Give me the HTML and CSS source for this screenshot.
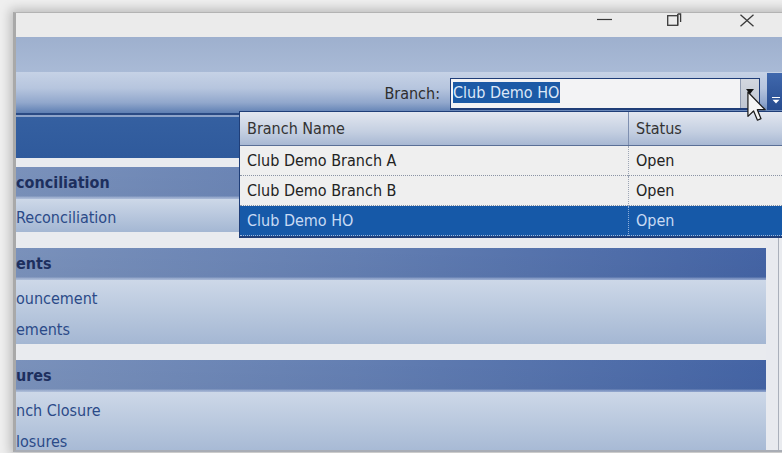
FILE: index.html
```html
<!DOCTYPE html>
<html lang="en">
<head>
<meta charset="utf-8">
<title>Branch</title>
<link rel="stylesheet" href="styles.css">
</head>
<body>
<div class="window">
  <div class="titlebar">
    <svg class="ctl ctl-min" width="15" height="12" viewBox="0 0 15 12"><path d="M0 5.5H15" stroke="#3a3a3a" stroke-width="1.2"/></svg>
    <svg class="ctl ctl-max" width="15" height="13" viewBox="0 0 15 13"><rect x="0.7" y="2.7" width="10" height="9.6" fill="none" stroke="#3a3a3a" stroke-width="1.3"/><path d="M10.7 1V12.3M10.7 1H13.6V9" fill="none" stroke="#3a3a3a" stroke-width="1.3"/></svg>
    <svg class="ctl ctl-close" width="16" height="13" viewBox="0 0 16 13"><path d="M1.5 0.8L14.5 12.2M14.5 0.8L1.5 12.2" stroke="#3a3a3a" stroke-width="1.3"/></svg>
  </div>
  <div class="ribbon"></div>
  <div class="toolbar">
    <span class="branch-label">Branch:</span>
    <div class="combo">
      <span class="combo-text"><span class="combo-sel">Club Demo HO</span></span>
      <span class="combo-btn"><svg width="8" height="5" viewBox="0 0 8 5"><path d="M0 0H8L4 5Z" fill="#111"/></svg></span>
    </div>
    <span class="qa-btn"><svg width="8" height="7" viewBox="0 0 8 7"><path d="M0 0.5H8" stroke="#fff"/><path d="M0.5 2.8H7.5L4 6.6Z" fill="#fff"/></svg></span>
  </div>
  <div class="content">
    <div class="nav">
      <div class="nav-top"></div>
      <section class="group">
        <div class="group-head">conciliation</div>
        <div class="group-items">
          <div class="item">Reconciliation</div>
        </div>
      </section>
      <section class="group">
        <div class="group-head">ents</div>
        <div class="group-items">
          <div class="item">ouncement</div>
          <div class="item">ements</div>
        </div>
      </section>
      <section class="group">
        <div class="group-head">ures</div>
        <div class="group-items">
          <div class="item">nch Closure</div>
          <div class="item">losures</div>
        </div>
      </section>
    </div>
    <div class="gutter"></div>
  </div>

  <div class="popup">
    <div class="prow phead">
      <div class="pcell">Branch Name</div>
      <div class="pcell">Status</div>
    </div>
    <div class="prow">
      <div class="pcell">Club Demo Branch A</div>
      <div class="pcell">Open</div>
    </div>
    <div class="prow">
      <div class="pcell">Club Demo Branch B</div>
      <div class="pcell">Open</div>
    </div>
    <div class="prow psel">
      <div class="pcell">Club Demo HO</div>
      <div class="pcell">Open</div>
    </div>
  </div>

  <svg class="cursor" width="20" height="31" viewBox="0 0 13 20"><path d="M0.6 0.6V16.4L4.3 12.9L6.8 18.9L9.1 17.9L6.7 12.1H11.8Z" fill="#f4f4f4" stroke="#1a1a1a" stroke-width="0.8" stroke-linejoin="round"/></svg>
</div>
</body>
</html>
```

FILE: styles.css
```css
html, body {
  margin: 0;
  padding: 0;
}

body {
  width: 782px;
  height: 453px;
  overflow: hidden;
  background: #efefef;
  font-family: "DejaVu Sans Condensed", "DejaVu Sans", sans-serif;
  font-stretch: condensed;
  font-size: 16px;
}

/* application window */
.window {
  position: relative;
  margin: 12px 0 0 13px;
  width: 772px;
  height: 437px;
  border-left: 3px solid #a9a9a9;
  border-top: 1px solid #b3b3b3;
  border-bottom: 2px solid #a9adb5;
  box-shadow: 0 0 10px 3px rgba(0, 0, 0, 0.22);
  background: #e9ebef;
  display: flex;
  flex-direction: column;
}

.titlebar {
  height: 24px;
  flex: none;
  background: #ebebeb;
  display: flex;
  align-items: flex-start;
  padding-left: 581px;
  box-sizing: border-box;
}

.ctl { display: block; flex: none; }
.ctl-min { margin-top: 1px; }
.ctl-max { margin-left: 55px; margin-top: 0; }
.ctl-close { margin-left: 57px; margin-top: 1px; }

.ribbon {
  height: 35px;
  flex: none;
  background: linear-gradient(#9eb0ce, #a9bad6);
}

.toolbar {
  height: 41px;
  flex: none;
  box-sizing: border-box;
  padding-top: 6px;
  display: flex;
  align-items: flex-start;
  background: linear-gradient(#c6d2e6 0%, #b6c5de 40%, #91a7cc 75%, #5e7fb3 100%);
}

.branch-label {
  margin-left: auto;
  color: #2e2e2e;
  line-height: 32px;
}

.combo {
  margin-left: 10px;
  width: 310px;
  height: 32px;
  box-sizing: border-box;
  border: 1px solid #1f3d78;
  border-bottom-width: 2px;
  background: #f3f3f5;
  display: flex;
}

.combo-text {
  flex: 1;
  padding: 3px 0 0 2px;
}

.combo-sel {
  display: inline-block;
  background: #1c5aa6;
  color: #dce8f8;
  line-height: 21px;
  padding-right: 1px;
}

.combo-btn {
  width: 19px;
  background: linear-gradient(#d3d7df, #bfc6d2);
  border-left: 1px solid #8f9ab0;
  display: flex;
  justify-content: center;
  padding-top: 10px;
  box-sizing: border-box;
}
.combo-btn svg { display: block; }

.qa-btn {
  margin-left: 7px;
  margin-top: -5px;
  width: 21px;
  height: 37px;
  background: linear-gradient(#4068ad, #274c8f);
  box-sizing: border-box;
  padding: 24px 0 0 5px;
}
.qa-btn svg { display: block; }

/* navigation area */
.content {
  flex: 1;
  display: flex;
  min-height: 0;
}

.nav {
  width: 750px;
  flex: none;
  overflow: hidden;
}

.nav-top {
  height: 43px;
  border-top: 2px solid #2a4a84;
  box-shadow: inset 0 2px 0 #8ea4ca;
  background: linear-gradient(#3560a1, #2f5a9c);
  margin-bottom: 9px;
}

.group + .group { margin-top: 16px; }

.group-head {
  height: 32px;
  line-height: 32px;
  box-sizing: border-box;
  font-weight: bold;
  color: #1d2f5e;
  white-space: nowrap;
  background:
    linear-gradient(rgba(0, 0, 0, 0.03), rgba(0, 0, 0, 0.05) 90%, rgba(255, 255, 255, 0.35) 97%),
    linear-gradient(90deg, #7e96c1, #6783b8 45%, #4667aa);
}

.group-items {
  padding: 1px 0;
  background: linear-gradient(#cdd8e8, #a4b7d3);
}

.item {
  height: 31px;
  box-sizing: border-box;
  padding-top: 5px;
  line-height: 26px;
  color: #2b4a88;
  white-space: nowrap;
}

.gutter {
  width: 12px;
  flex: none;
  background: #e8eaef;
  border-right: 1px solid #aab0bb;
}

/* branch drop-down list */
.popup {
  position: absolute;
  left: 223px;
  top: 98px;
  width: 570px;
  border: 1px solid #1f3e78;
  border-bottom-width: 2px;
  background: #efefef;
  color: #222;
}

.prow {
  display: grid;
  grid-template-columns: 388px 1fr;
  height: 30px;
  line-height: 30px;
  border-bottom: 1px dotted #8a93a4;
  box-sizing: border-box;
}

.prow .pcell { padding-left: 7px; white-space: nowrap; }
.prow .pcell + .pcell { border-left: 1px dotted #9aa3b3; }

.phead {
  height: 34px;
  line-height: 33px;
  color: #333;
  border-bottom: 1px solid #5a6f96;
  background: linear-gradient(#e2e7f0, #c4cfe1 60%, #a8b8d3);
}
.phead .pcell + .pcell { border-left: 1px solid #7e8fb0; }

.psel {
  background: #1659a8;
  color: #c9dbf4;
  border-bottom: 1px dotted #9fb9dc;
}
.psel .pcell + .pcell { border-left-color: #8fb0dc; }

.cursor {
  position: absolute;
  left: 731px;
  top: 78px;
}
```
